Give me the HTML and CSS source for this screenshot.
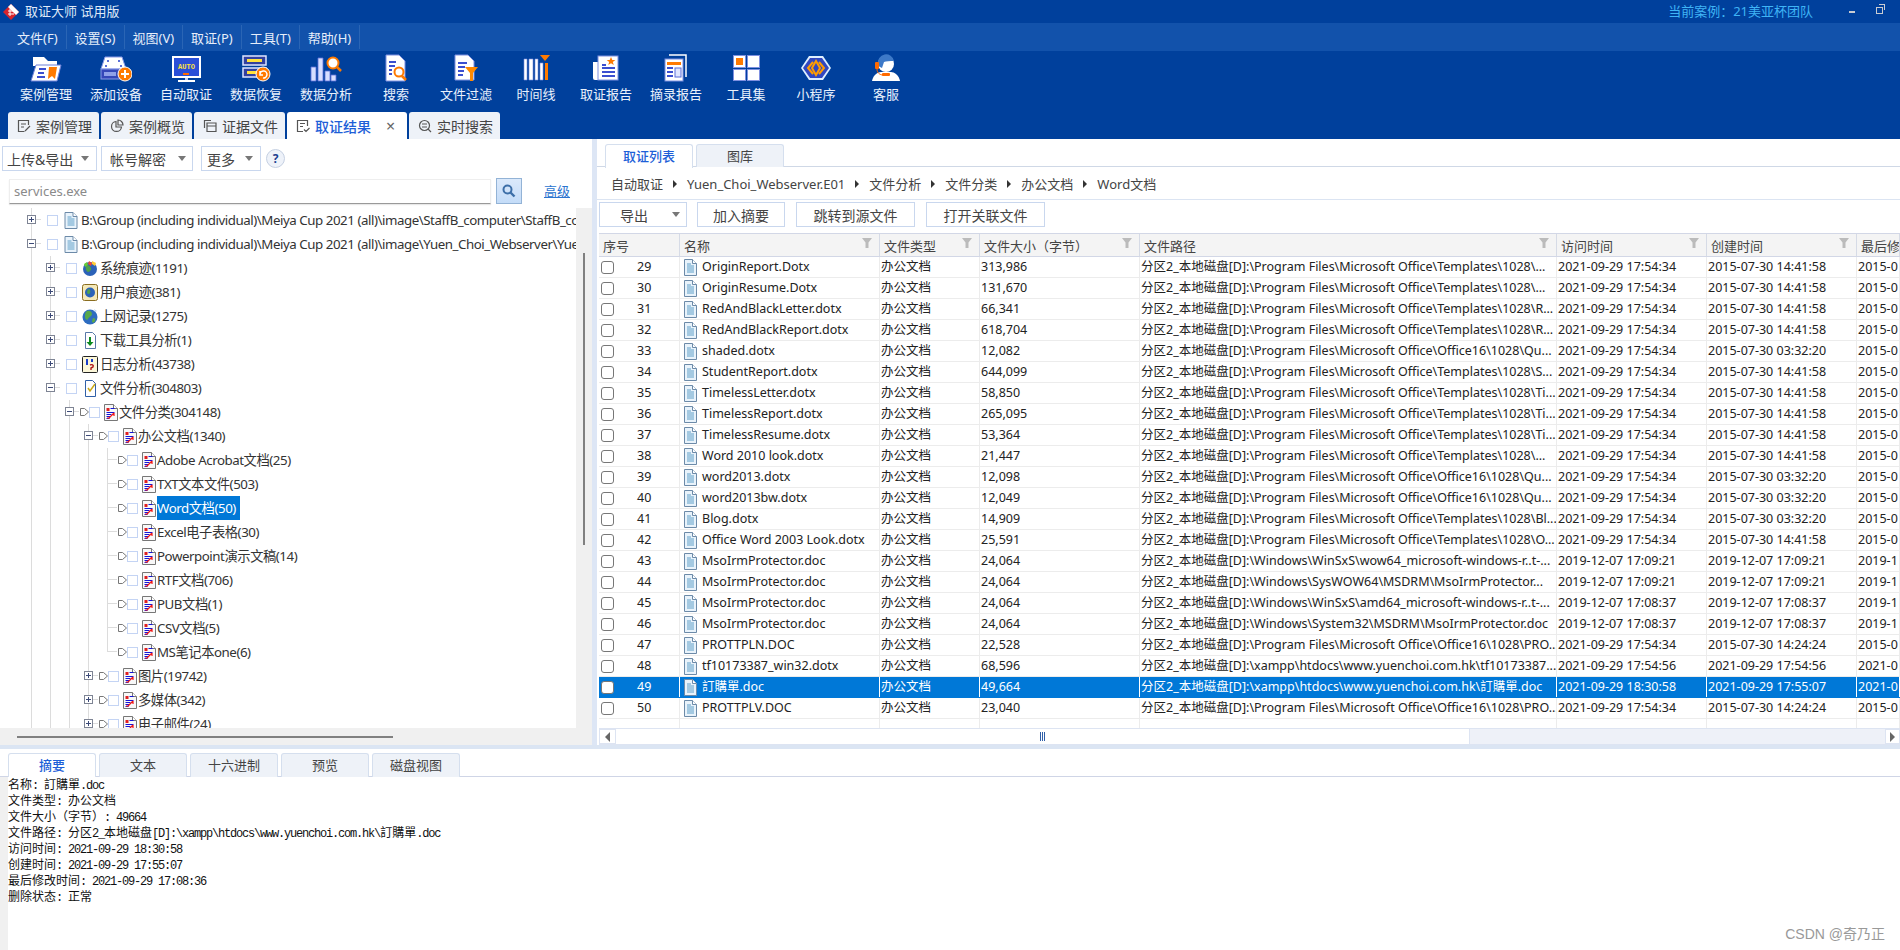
FILE: index.html
```html
<!DOCTYPE html>
<html lang="zh-CN">
<head>
<meta charset="utf-8">
<title>取证大师 试用版</title>
<link rel="stylesheet" href="styles.css">
</head>
<body>
<svg class="sprite" xmlns="http://www.w3.org/2000/svg">
  <symbol id="i-case" viewBox="0 0 32 28"><path d="M3 3h11l4 4h9v5H3z" fill="#fff"/><path d="M6 11h25l-4 16H1z" fill="#fff" stroke="#6d80d8"/><path d="M9 15h7M8 19h6M7 23h8" stroke="#3b4fd0" stroke-width="2"/><path d="M19 13h8l-2 12-3-3-4 3z" fill="#ff7a00"/></symbol>
  <symbol id="i-add" viewBox="0 0 32 28"><path d="M5 3h17l4 12H1z" fill="#fff" stroke="#8a9ae8"/><path d="M7 6h2v2H7zM18 6h2v2h-2zM5 11h2v2H5zM20 11h2v2h-2z" fill="#5a6fd8"/><rect x="1" y="15" width="25" height="10" fill="#3447b8" stroke="#8a9ae8"/><rect x="4" y="18" width="12" height="4" fill="#8fa0e8"/><circle cx="25" cy="20" r="7" fill="#ff7a00" stroke="#fff"/><path d="M25 16v8M21 20h8" stroke="#fff" stroke-width="2"/></symbol>
  <symbol id="i-auto" viewBox="0 0 32 28"><rect x="3" y="3" width="27" height="20" fill="#2a4fd8" stroke="#fff" stroke-width="2"/><text x="16.500" y="15" text-anchor="middle" class="auto">AUTO</text><rect x="13" y="19" width="6" height="2" fill="#ff6a00"/><path d="M15 24h3v2h-3z" fill="#c5d0f5"/><path d="M8 27h17" stroke="#fff" stroke-width="2"/></symbol>
  <symbol id="i-rec" viewBox="0 0 32 28"><rect x="3" y="2" width="23" height="9" fill="#33409f" stroke="#dfe5ff" stroke-width="1.500"/><rect x="7" y="5" width="15" height="3" fill="#ffe23c"/><rect x="3" y="14" width="23" height="9" fill="#33409f" stroke="#dfe5ff" stroke-width="1.500"/><rect x="7" y="17" width="12" height="3" fill="#ffe23c"/><circle cx="23" cy="20" r="7" fill="#ff7a00" stroke="#fff"/><path d="M20 20a3.500 3.500 0 1 1 3 4M20 17v4h3" fill="none" stroke="#fff" stroke-width="1.500"/></symbol>
  <symbol id="i-ana" viewBox="0 0 32 28"><path d="M1 13h5v14H1zM8 4h5v23H8zM15 17h5v10h-5zM21 21h5v6h-5z" fill="#d7deff" stroke="#5a6fd8" stroke-width=".8"/><circle cx="23" cy="9" r="5.500" fill="#fff" stroke="#ff7a00" stroke-width="2"/><path d="M27 13l4 4" stroke="#ff7a00" stroke-width="2.500"/></symbol>
  <symbol id="i-find" viewBox="0 0 32 28"><path d="M6 1h13l6 6v20H6z" fill="#fff" stroke="#7d8fe0"/><path d="M9 8h7M9 12h6M9 16h3M9 20h3" stroke="#3b4fd0" stroke-width="2"/><circle cx="19" cy="18" r="4.500" fill="#fff" stroke="#ff7a00" stroke-width="2"/><path d="M22 22l4 4" stroke="#ff7a00" stroke-width="2.500"/></symbol>
  <symbol id="i-filter" viewBox="0 0 32 28"><path d="M5 1h13l6 6v19H5z" fill="#fff" stroke="#7d8fe0"/><path d="M8 9h9M8 13h7M8 17h6M8 21h5" stroke="#3b4fd0" stroke-width="2"/><path d="M15 13h13l-5 6v8h-3v-8z" fill="#ff8a00"/></symbol>
  <symbol id="i-time" viewBox="0 0 32 28"><path d="M4 5h3v21H4zM9 5h4v21H9zM15 5h3v21h-3zM20 9h3v17h-3z" fill="#fff" stroke="#7d8fe0" stroke-width=".6"/><path d="M25 9h3v17h-3z" fill="#ff7a00"/><path d="M20 1h10l-5 6z" fill="#ff7a00"/></symbol>
  <symbol id="i-rep" viewBox="0 0 32 28"><path d="M3 8h5v18H5a2 2 0 0 1-2-2z" fill="#fff"/><rect x="8" y="2" width="20" height="24" fill="#fff" stroke="#7d8fe0"/><path d="M12 10h4v2h-4z" fill="#3b4fd0"/><path d="M12 14h13M12 18h13M12 22h13" stroke="#3b4fd0" stroke-width="2"/><path d="M21 3l1.300 3h3l-2.500 2 1 3-2.800-1.800-2.800 1.800 1-3-2.500-2h3z" fill="#ff7a00"/></symbol>
  <symbol id="i-exc" viewBox="0 0 32 28"><path d="M9 1h17v22" fill="none" stroke="#fff" stroke-width="1.500"/><rect x="5" y="5" width="18" height="22" fill="#fff" stroke="#7d8fe0"/><rect x="7" y="8" width="14" height="3" fill="#ff7a00"/><path d="M7 14h6M7 18h6M7 22h6" stroke="#3b4fd0" stroke-width="2"/><rect x="15" y="14" width="6" height="9" fill="#dfe5ff" stroke="#5a6fd8"/></symbol>
  <symbol id="i-tool" viewBox="0 0 32 28"><rect x="3.500" y="1.500" width="12" height="12" fill="#fff" stroke="#7d8fe0"/><rect x="6" y="4" width="7" height="7" fill="#ff7a00"/><rect x="17.500" y="1.500" width="12" height="12" fill="#fff" stroke="#7d8fe0"/><rect x="3.500" y="15.500" width="12" height="11" fill="#fff" stroke="#7d8fe0"/><rect x="17.500" y="15.500" width="12" height="11" fill="#fff" stroke="#7d8fe0"/></symbol>
  <symbol id="i-mini" viewBox="0 0 32 28"><path d="M9 2h14l8 12-8 12H9L1 14z" fill="#dff0ff"/><path d="M10 4h12l7 10-7 10H10L3 14z" fill="#3147c0"/><path d="M13 8l-5 6 5 6M19 8l5 6-5 6M16 7l-4 7 4 7 4-7z" fill="none" stroke="#ff9c00" stroke-width="2"/></symbol>
  <symbol id="i-srv" viewBox="0 0 32 28"><path d="M2 27c1-6 6-9 9-9h10c3 0 8 3 9 9z" fill="#fff"/><circle cx="16" cy="10" r="8" fill="#fff"/><path d="M8 10a8 8 0 0 1 16-3c-4 0-8 0-10 1l-2 6c-2-1-4-2-4-4z" fill="#3d79c8"/><rect x="5" y="8" width="4" height="7" rx="1" fill="#ff6a00"/><path d="M7 15c0 4 3 6 6 6" fill="none" stroke="#ff6a00"/><rect x="12" y="19" width="8" height="3" rx="1" fill="#ff6a00"/></symbol>
  <symbol id="t-edit" viewBox="0 0 14 14"><path d="M11.500 6V1.500h-10v11h6M4 5h5M4 8h3M8 12l5-5" fill="none" stroke="#555" stroke-width="1.200"/></symbol>
  <symbol id="t-pie" viewBox="0 0 14 14"><path d="M6 2.500a5 5 0 1 0 5.500 5.500H6z" fill="none" stroke="#555" stroke-width="1.200"/><path d="M8 1a5 5 0 0 1 5 5H8z" fill="none" stroke="#555" stroke-width="1.200"/></symbol>
  <symbol id="t-files" viewBox="0 0 14 14"><path d="M1.500 9V1.500H8M4 4h9v8.500H4zM4 7h9" fill="none" stroke="#555" stroke-width="1.200"/></symbol>
  <symbol id="t-res" viewBox="0 0 14 14"><path d="M7 12.500H1.500v-11h10V7M4 4.500h5M4 7.500h3M8 10.500l2 2 3.500-3.500" fill="none" stroke="#555" stroke-width="1.200"/></symbol>
  <symbol id="t-live" viewBox="0 0 14 14"><circle cx="6.500" cy="6.500" r="5" fill="none" stroke="#555" stroke-width="1.200"/><path d="M10 10l3 3M4 5h5M4 8h5" stroke="#555" stroke-width="1.200"/></symbol>
  <symbol id="f-doc" viewBox="0 0 13 17"><path d="M.500.500h8l4 4v12H.500z" fill="#e9f3fb" stroke="#6c8aa8"/><path d="M8.500.500v4h4" fill="#fff" stroke="#6c8aa8"/><path d="M3 5h4M3 7h7M3 9h7M3 11h7M3 13h7" stroke="#5f9fc8"/></symbol>
  <symbol id="f-rep" viewBox="0 0 15 17"><path d="M1.500.500h9l4 4v12h-13z" fill="#f8f8f8" stroke="#777"/><path d="M10.500.500v4h4" fill="#fff" stroke="#777"/><path d="M3.500 4h3v3h-3z" fill="#e02020"/><path d="M7.500 4.500h4M3.500 8.500h8M3.500 10.500h5M3.500 12.500h4M3.500 14.500h3" stroke="#1414d8"/><path d="M11 9l-5 5M7 14h-3M11 9v3" stroke="#f01818" stroke-width="1.200" fill="none"/></symbol>
  <symbol id="f-sys" viewBox="0 0 16 17"><circle cx="8" cy="9" r="7" fill="#2b62b8"/><path d="M4 6c2-2 4 0 5 2s-2 4-3 4-3-3-2-6z" fill="#4fa04a"/><path d="M7 1l3 2-1 3-3-2z" fill="#e43"/><path d="M10 1l4 2-1 3-3-2z" fill="#fc3"/><path d="M2 4l3-2 1 3-3 2z" fill="#6c3"/></symbol>
  <symbol id="f-usr" viewBox="0 0 16 17"><rect x=".500" y=".500" width="15" height="16" rx="2" fill="#f4e8b8" stroke="#8a6d20"/><circle cx="8" cy="8.500" r="5" fill="#2b62b8"/><path d="M6 5c2 0 3 2 2 4s-3 1-3-1z" fill="#4fa04a"/></symbol>
  <symbol id="f-web" viewBox="0 0 16 17"><circle cx="8" cy="9" r="7.500" fill="#2d6cc0"/><path d="M5 3c3-1 5 1 5 3s-3 3-4 5-3 0-3-2 0-5 2-6z" fill="#59a84a"/><path d="M11 10c2 0 3 1 2 3s-3 2-3 0z" fill="#59a84a"/><path d="M12 1l3 2-2 1z" fill="#bcd8f5"/></symbol>
  <symbol id="f-dl" viewBox="0 0 16 17"><path d="M3.500.500h7l3 3v13h-10z" fill="#fff" stroke="#5878a8"/><path d="M7 5h2v5h2.500L8 14 4.500 10H7z" fill="#0c8a20"/></symbol>
  <symbol id="f-log" viewBox="0 0 16 17"><rect x=".500" y=".500" width="15" height="16" rx="1" fill="#fbf6d8" stroke="#222"/><path d="M4 3h2v6H4z" fill="#1a3ec8"/><path d="M9 3h2v3H9z" fill="#1a3ec8"/><path d="M8 9c2-1 4 0 3 2l-2 1v2" fill="none" stroke="#b01818" stroke-width="1.400"/></symbol>
  <symbol id="f-ana" viewBox="0 0 16 17"><path d="M3.500.500h7l3 3v13h-10z" fill="#fff" stroke="#3060a8"/><path d="M6 8l2 3 5-7" fill="none" stroke="#c8a818" stroke-width="1.500"/></symbol>
  <symbol id="tri" viewBox="0 0 9 10"><path d="M.500 1.500H4.500L8.500 5l-4 3.500h-4z" fill="#fff" stroke="#777"/></symbol>
  <symbol id="funnel" viewBox="0 0 10 12"><path d="M0 1h10L6.500 5.500V11h-3V5.500z" fill="#bbb"/></symbol>
  <symbol id="logo" viewBox="0 0 16 16"><path d="M8 0l8 8-8 8-8-8z" fill="#d8242c"/><path d="M8 0l8 8-3 3L5 3z" fill="#fff"/><path d="M5 7h6M5 10h6M7 5v7" stroke="#fff"/></symbol>
</svg>

<header class="top">
  <div class="titlebar">
    <svg class="logo"><use href="#logo"/></svg>
    <span class="apptitle">取证大师 试用版</span>
    <span class="curcase">当前案例：21美亚杯团队</span>
    <span class="win-min"></span>
    <span class="win-max"><i></i></span>
  </div>
  <nav class="menubar">
    <span class="mi">文件(F)</span><span class="mi">设置(S)</span><span class="mi">视图(V)</span><span class="mi">取证(P)</span><span class="mi">工具(T)</span><span class="mi">帮助(H)</span>
  </nav>
  <div class="ribbon">
    <div class="rb"><svg><use href="#i-case"/></svg><span>案例管理</span></div>
    <div class="rb"><svg><use href="#i-add"/></svg><span>添加设备</span></div>
    <div class="rb"><svg><use href="#i-auto"/></svg><span>自动取证</span></div>
    <div class="rb"><svg><use href="#i-rec"/></svg><span>数据恢复</span></div>
    <div class="rb"><svg><use href="#i-ana"/></svg><span>数据分析</span></div>
    <div class="rb"><svg><use href="#i-find"/></svg><span>搜索</span></div>
    <div class="rb"><svg><use href="#i-filter"/></svg><span>文件过滤</span></div>
    <div class="rb"><svg><use href="#i-time"/></svg><span>时间线</span></div>
    <div class="rb"><svg><use href="#i-rep"/></svg><span>取证报告</span></div>
    <div class="rb"><svg><use href="#i-exc"/></svg><span>摘录报告</span></div>
    <div class="rb"><svg><use href="#i-tool"/></svg><span>工具集</span></div>
    <div class="rb"><svg><use href="#i-mini"/></svg><span>小程序</span></div>
    <div class="rb"><svg><use href="#i-srv"/></svg><span>客服</span></div>
  </div>
  <div class="maintabs">
    <div class="mt"><svg><use href="#t-edit"/></svg><span>案例管理</span></div>
    <div class="mt"><svg><use href="#t-pie"/></svg><span>案例概览</span></div>
    <div class="mt"><svg><use href="#t-files"/></svg><span>证据文件</span></div>
    <div class="mt mt-on"><svg><use href="#t-res"/></svg><span>取证结果</span><b class="close">×</b></div>
    <div class="mt"><svg><use href="#t-live"/></svg><span>实时搜索</span></div>
  </div>
</header>

<main class="workspace">
  <section class="left">
    <div class="ltools">
      <div class="btn b-up"><span>上传&amp;导出</span><i class="caret"></i></div>
      <div class="btn b-acc"><span>帐号解密</span><i class="caret"></i></div>
      <div class="btn b-more"><span>更多</span><i class="caret"></i></div>
      <div class="help">?</div>
    </div>
    <div class="searchrow">
      <div class="sinput">services.exe</div>
      <div class="sbtn"><svg viewBox="0 0 14 14"><circle cx="5.500" cy="5.500" r="4" fill="none" stroke="#3d6fa8" stroke-width="2"/><path d="M8.500 8.500l4 4" stroke="#3d6fa8" stroke-width="2.400"/></svg></div>
      <a class="adv">高级</a>
    </div>
    <div class="treewrap">
      <div class="tree">
        <div class="tr"><span class="exp"><i class="box plus"></i></span><i class="ck ck-a"></i><svg class="ti ti-a"><use href="#f-doc"/></svg><span class="tx tx-root">B:\Group (including individual)\Meiya Cup 2021 (all)\image\StaffB_computer\StaffB_co</span></div>
        <div class="tr"><span class="exp"><i class="box minus"></i></span><i class="ck ck-a"></i><svg class="ti ti-a"><use href="#f-doc"/></svg><span class="tx tx-root">B:\Group (including individual)\Meiya Cup 2021 (all)\image\Yuen_Choi_Webserver\Yue</span></div>
        <div class="tr"><i class="ind"></i><span class="exp"><i class="box plus"></i></span><i class="ck ck-a"></i><svg class="ti ti-a"><use href="#f-sys"/></svg><span class="tx">系统痕迹(1191)</span></div>
        <div class="tr"><i class="ind"></i><span class="exp"><i class="box plus"></i></span><i class="ck ck-a"></i><svg class="ti ti-a"><use href="#f-usr"/></svg><span class="tx">用户痕迹(381)</span></div>
        <div class="tr"><i class="ind"></i><span class="exp"><i class="box plus"></i></span><i class="ck ck-a"></i><svg class="ti ti-a"><use href="#f-web"/></svg><span class="tx">上网记录(1275)</span></div>
        <div class="tr"><i class="ind"></i><span class="exp"><i class="box plus"></i></span><i class="ck ck-a"></i><svg class="ti ti-a"><use href="#f-dl"/></svg><span class="tx">下载工具分析(1)</span></div>
        <div class="tr"><i class="ind"></i><span class="exp"><i class="box plus"></i></span><i class="ck ck-a"></i><svg class="ti ti-a"><use href="#f-log"/></svg><span class="tx">日志分析(43738)</span></div>
        <div class="tr"><i class="ind"></i><span class="exp"><i class="box minus"></i></span><i class="ck ck-a"></i><svg class="ti ti-a"><use href="#f-ana"/></svg><span class="tx">文件分析(304803)</span></div>
        <div class="tr"><i class="ind"></i><i class="ind"></i><span class="exp"><i class="box minus"></i></span><svg class="tri"><use href="#tri"/></svg><i class="ck"></i><svg class="ti"><use href="#f-rep"/></svg><span class="tx">文件分类(304148)</span></div>
        <div class="tr"><i class="ind"></i><i class="ind"></i><i class="ind"></i><span class="exp"><i class="box minus"></i></span><svg class="tri"><use href="#tri"/></svg><i class="ck"></i><svg class="ti"><use href="#f-rep"/></svg><span class="tx">办公文档(1340)</span></div>
        <div class="tr"><i class="ind"></i><i class="ind"></i><i class="ind"></i><i class="ind"></i><span class="exp"></span><svg class="tri"><use href="#tri"/></svg><i class="ck"></i><svg class="ti"><use href="#f-rep"/></svg><span class="tx">Adobe Acrobat文档(25)</span></div>
        <div class="tr"><i class="ind"></i><i class="ind"></i><i class="ind"></i><i class="ind"></i><span class="exp"></span><svg class="tri"><use href="#tri"/></svg><i class="ck"></i><svg class="ti"><use href="#f-rep"/></svg><span class="tx">TXT文本文件(503)</span></div>
        <div class="tr"><i class="ind"></i><i class="ind"></i><i class="ind"></i><i class="ind"></i><span class="exp"></span><svg class="tri"><use href="#tri"/></svg><i class="ck"></i><svg class="ti"><use href="#f-rep"/></svg><span class="tx tx-sel">Word文档(50)</span></div>
        <div class="tr"><i class="ind"></i><i class="ind"></i><i class="ind"></i><i class="ind"></i><span class="exp"></span><svg class="tri"><use href="#tri"/></svg><i class="ck"></i><svg class="ti"><use href="#f-rep"/></svg><span class="tx">Excel电子表格(30)</span></div>
        <div class="tr"><i class="ind"></i><i class="ind"></i><i class="ind"></i><i class="ind"></i><span class="exp"></span><svg class="tri"><use href="#tri"/></svg><i class="ck"></i><svg class="ti"><use href="#f-rep"/></svg><span class="tx">Powerpoint演示文稿(14)</span></div>
        <div class="tr"><i class="ind"></i><i class="ind"></i><i class="ind"></i><i class="ind"></i><span class="exp"></span><svg class="tri"><use href="#tri"/></svg><i class="ck"></i><svg class="ti"><use href="#f-rep"/></svg><span class="tx">RTF文档(706)</span></div>
        <div class="tr"><i class="ind"></i><i class="ind"></i><i class="ind"></i><i class="ind"></i><span class="exp"></span><svg class="tri"><use href="#tri"/></svg><i class="ck"></i><svg class="ti"><use href="#f-rep"/></svg><span class="tx">PUB文档(1)</span></div>
        <div class="tr"><i class="ind"></i><i class="ind"></i><i class="ind"></i><i class="ind"></i><span class="exp"></span><svg class="tri"><use href="#tri"/></svg><i class="ck"></i><svg class="ti"><use href="#f-rep"/></svg><span class="tx">CSV文档(5)</span></div>
        <div class="tr"><i class="ind"></i><i class="ind"></i><i class="ind"></i><i class="ind"></i><span class="exp exp-last"></span><svg class="tri"><use href="#tri"/></svg><i class="ck"></i><svg class="ti"><use href="#f-rep"/></svg><span class="tx">MS笔记本one(6)</span></div>
        <div class="tr"><i class="ind"></i><i class="ind"></i><i class="ind"></i><span class="exp"><i class="box plus"></i></span><svg class="tri"><use href="#tri"/></svg><i class="ck"></i><svg class="ti"><use href="#f-rep"/></svg><span class="tx">图片(19742)</span></div>
        <div class="tr"><i class="ind"></i><i class="ind"></i><i class="ind"></i><span class="exp"><i class="box plus"></i></span><svg class="tri"><use href="#tri"/></svg><i class="ck"></i><svg class="ti"><use href="#f-rep"/></svg><span class="tx">多媒体(342)</span></div>
        <div class="tr"><i class="ind"></i><i class="ind"></i><i class="ind"></i><span class="exp"><i class="box plus"></i></span><svg class="tri"><use href="#tri"/></svg><i class="ck"></i><svg class="ti"><use href="#f-rep"/></svg><span class="tx">电子邮件(24)</span></div>
      </div>
      <div class="vscroll"><i></i></div>
    </div>
    <div class="hscroll-l"><i></i></div>
  </section>
  <div class="splitter"></div>
  <section class="right">
    <div class="rtabs"><div class="rt rt-on">取证列表</div><div class="rt">图库</div></div>
    <div class="crumbs"><span>自动取证</span><i class="sep"></i><span>Yuen_Choi_Webserver.E01</span><i class="sep"></i><span>文件分析</span><i class="sep"></i><span>文件分类</span><i class="sep"></i><span>办公文档</span><i class="sep"></i><span>Word文档</span></div>
    <div class="rtools">
      <div class="btn b-exp"><span>导出</span><i class="caret"></i></div>
      <div class="btn b-a">加入摘要</div>
      <div class="btn b-b">跳转到源文件</div>
      <div class="btn b-b">打开关联文件</div>
    </div>
    <div class="grid">
      <div class="row head">
        <div class="h"><span>序号</span></div>
        <div class="h"><span>名称</span><svg class="fn"><use href="#funnel"/></svg></div>
        <div class="h"><span>文件类型</span><svg class="fn"><use href="#funnel"/></svg></div>
        <div class="h"><span>文件大小（字节）</span><svg class="fn"><use href="#funnel"/></svg></div>
        <div class="h"><span>文件路径</span><svg class="fn"><use href="#funnel"/></svg></div>
        <div class="h"><span>访问时间</span><svg class="fn"><use href="#funnel"/></svg></div>
        <div class="h"><span>创建时间</span><svg class="fn"><use href="#funnel"/></svg></div>
        <div class="h"><span>最后修</span></div>
      </div>
      <div class="row"><div class="c c-no"><i class="cb"></i><span>29</span></div><div class="c c-name"><svg class="fi"><use href="#f-doc"/></svg><span>OriginReport.Dotx</span></div><div class="c">办公文档</div><div class="c">313,986</div><div class="c">分区2_本地磁盘[D]:\Program Files\Microsoft Office\Templates\1028\...</div><div class="c">2021-09-29 17:54:34</div><div class="c">2015-07-30 14:41:58</div><div class="c">2015-0</div></div>
      <div class="row"><div class="c c-no"><i class="cb"></i><span>30</span></div><div class="c c-name"><svg class="fi"><use href="#f-doc"/></svg><span>OriginResume.Dotx</span></div><div class="c">办公文档</div><div class="c">131,670</div><div class="c">分区2_本地磁盘[D]:\Program Files\Microsoft Office\Templates\1028\...</div><div class="c">2021-09-29 17:54:34</div><div class="c">2015-07-30 14:41:58</div><div class="c">2015-0</div></div>
      <div class="row"><div class="c c-no"><i class="cb"></i><span>31</span></div><div class="c c-name"><svg class="fi"><use href="#f-doc"/></svg><span>RedAndBlackLetter.dotx</span></div><div class="c">办公文档</div><div class="c">66,341</div><div class="c">分区2_本地磁盘[D]:\Program Files\Microsoft Office\Templates\1028\R...</div><div class="c">2021-09-29 17:54:34</div><div class="c">2015-07-30 14:41:58</div><div class="c">2015-0</div></div>
      <div class="row"><div class="c c-no"><i class="cb"></i><span>32</span></div><div class="c c-name"><svg class="fi"><use href="#f-doc"/></svg><span>RedAndBlackReport.dotx</span></div><div class="c">办公文档</div><div class="c">618,704</div><div class="c">分区2_本地磁盘[D]:\Program Files\Microsoft Office\Templates\1028\R...</div><div class="c">2021-09-29 17:54:34</div><div class="c">2015-07-30 14:41:58</div><div class="c">2015-0</div></div>
      <div class="row"><div class="c c-no"><i class="cb"></i><span>33</span></div><div class="c c-name"><svg class="fi"><use href="#f-doc"/></svg><span>shaded.dotx</span></div><div class="c">办公文档</div><div class="c">12,082</div><div class="c">分区2_本地磁盘[D]:\Program Files\Microsoft Office\Office16\1028\Qu...</div><div class="c">2021-09-29 17:54:34</div><div class="c">2015-07-30 03:32:20</div><div class="c">2015-0</div></div>
      <div class="row"><div class="c c-no"><i class="cb"></i><span>34</span></div><div class="c c-name"><svg class="fi"><use href="#f-doc"/></svg><span>StudentReport.dotx</span></div><div class="c">办公文档</div><div class="c">644,099</div><div class="c">分区2_本地磁盘[D]:\Program Files\Microsoft Office\Templates\1028\S...</div><div class="c">2021-09-29 17:54:34</div><div class="c">2015-07-30 14:41:58</div><div class="c">2015-0</div></div>
      <div class="row"><div class="c c-no"><i class="cb"></i><span>35</span></div><div class="c c-name"><svg class="fi"><use href="#f-doc"/></svg><span>TimelessLetter.dotx</span></div><div class="c">办公文档</div><div class="c">58,850</div><div class="c">分区2_本地磁盘[D]:\Program Files\Microsoft Office\Templates\1028\Ti...</div><div class="c">2021-09-29 17:54:34</div><div class="c">2015-07-30 14:41:58</div><div class="c">2015-0</div></div>
      <div class="row"><div class="c c-no"><i class="cb"></i><span>36</span></div><div class="c c-name"><svg class="fi"><use href="#f-doc"/></svg><span>TimelessReport.dotx</span></div><div class="c">办公文档</div><div class="c">265,095</div><div class="c">分区2_本地磁盘[D]:\Program Files\Microsoft Office\Templates\1028\Ti...</div><div class="c">2021-09-29 17:54:34</div><div class="c">2015-07-30 14:41:58</div><div class="c">2015-0</div></div>
      <div class="row"><div class="c c-no"><i class="cb"></i><span>37</span></div><div class="c c-name"><svg class="fi"><use href="#f-doc"/></svg><span>TimelessResume.dotx</span></div><div class="c">办公文档</div><div class="c">53,364</div><div class="c">分区2_本地磁盘[D]:\Program Files\Microsoft Office\Templates\1028\Ti...</div><div class="c">2021-09-29 17:54:34</div><div class="c">2015-07-30 14:41:58</div><div class="c">2015-0</div></div>
      <div class="row"><div class="c c-no"><i class="cb"></i><span>38</span></div><div class="c c-name"><svg class="fi"><use href="#f-doc"/></svg><span>Word 2010 look.dotx</span></div><div class="c">办公文档</div><div class="c">21,447</div><div class="c">分区2_本地磁盘[D]:\Program Files\Microsoft Office\Templates\1028\...</div><div class="c">2021-09-29 17:54:34</div><div class="c">2015-07-30 14:41:58</div><div class="c">2015-0</div></div>
      <div class="row"><div class="c c-no"><i class="cb"></i><span>39</span></div><div class="c c-name"><svg class="fi"><use href="#f-doc"/></svg><span>word2013.dotx</span></div><div class="c">办公文档</div><div class="c">12,098</div><div class="c">分区2_本地磁盘[D]:\Program Files\Microsoft Office\Office16\1028\Qu...</div><div class="c">2021-09-29 17:54:34</div><div class="c">2015-07-30 03:32:20</div><div class="c">2015-0</div></div>
      <div class="row"><div class="c c-no"><i class="cb"></i><span>40</span></div><div class="c c-name"><svg class="fi"><use href="#f-doc"/></svg><span>word2013bw.dotx</span></div><div class="c">办公文档</div><div class="c">12,049</div><div class="c">分区2_本地磁盘[D]:\Program Files\Microsoft Office\Office16\1028\Qu...</div><div class="c">2021-09-29 17:54:34</div><div class="c">2015-07-30 03:32:20</div><div class="c">2015-0</div></div>
      <div class="row"><div class="c c-no"><i class="cb"></i><span>41</span></div><div class="c c-name"><svg class="fi"><use href="#f-doc"/></svg><span>Blog.dotx</span></div><div class="c">办公文档</div><div class="c">14,909</div><div class="c">分区2_本地磁盘[D]:\Program Files\Microsoft Office\Templates\1028\Bl...</div><div class="c">2021-09-29 17:54:34</div><div class="c">2015-07-30 03:32:20</div><div class="c">2015-0</div></div>
      <div class="row"><div class="c c-no"><i class="cb"></i><span>42</span></div><div class="c c-name"><svg class="fi"><use href="#f-doc"/></svg><span>Office Word 2003 Look.dotx</span></div><div class="c">办公文档</div><div class="c">25,591</div><div class="c">分区2_本地磁盘[D]:\Program Files\Microsoft Office\Templates\1028\O...</div><div class="c">2021-09-29 17:54:34</div><div class="c">2015-07-30 14:41:58</div><div class="c">2015-0</div></div>
      <div class="row"><div class="c c-no"><i class="cb"></i><span>43</span></div><div class="c c-name"><svg class="fi"><use href="#f-doc"/></svg><span>MsoIrmProtector.doc</span></div><div class="c">办公文档</div><div class="c">24,064</div><div class="c">分区2_本地磁盘[D]:\Windows\WinSxS\wow64_microsoft-windows-r..t-...</div><div class="c">2019-12-07 17:09:21</div><div class="c">2019-12-07 17:09:21</div><div class="c">2019-1</div></div>
      <div class="row"><div class="c c-no"><i class="cb"></i><span>44</span></div><div class="c c-name"><svg class="fi"><use href="#f-doc"/></svg><span>MsoIrmProtector.doc</span></div><div class="c">办公文档</div><div class="c">24,064</div><div class="c">分区2_本地磁盘[D]:\Windows\SysWOW64\MSDRM\MsoIrmProtector...</div><div class="c">2019-12-07 17:09:21</div><div class="c">2019-12-07 17:09:21</div><div class="c">2019-1</div></div>
      <div class="row"><div class="c c-no"><i class="cb"></i><span>45</span></div><div class="c c-name"><svg class="fi"><use href="#f-doc"/></svg><span>MsoIrmProtector.doc</span></div><div class="c">办公文档</div><div class="c">24,064</div><div class="c">分区2_本地磁盘[D]:\Windows\WinSxS\amd64_microsoft-windows-r..t-...</div><div class="c">2019-12-07 17:08:37</div><div class="c">2019-12-07 17:08:37</div><div class="c">2019-1</div></div>
      <div class="row"><div class="c c-no"><i class="cb"></i><span>46</span></div><div class="c c-name"><svg class="fi"><use href="#f-doc"/></svg><span>MsoIrmProtector.doc</span></div><div class="c">办公文档</div><div class="c">24,064</div><div class="c">分区2_本地磁盘[D]:\Windows\System32\MSDRM\MsoIrmProtector.doc</div><div class="c">2019-12-07 17:08:37</div><div class="c">2019-12-07 17:08:37</div><div class="c">2019-1</div></div>
      <div class="row"><div class="c c-no"><i class="cb"></i><span>47</span></div><div class="c c-name"><svg class="fi"><use href="#f-doc"/></svg><span>PROTTPLN.DOC</span></div><div class="c">办公文档</div><div class="c">22,528</div><div class="c">分区2_本地磁盘[D]:\Program Files\Microsoft Office\Office16\1028\PRO...</div><div class="c">2021-09-29 17:54:34</div><div class="c">2015-07-30 14:24:24</div><div class="c">2015-0</div></div>
      <div class="row"><div class="c c-no"><i class="cb"></i><span>48</span></div><div class="c c-name"><svg class="fi"><use href="#f-doc"/></svg><span>tf10173387_win32.dotx</span></div><div class="c">办公文档</div><div class="c">68,596</div><div class="c">分区2_本地磁盘[D]:\xampp\htdocs\www.yuenchoi.com.hk\tf10173387...</div><div class="c">2021-09-29 17:54:56</div><div class="c">2021-09-29 17:54:56</div><div class="c">2021-0</div></div>
      <div class="row row-sel"><div class="c c-no"><i class="cb"></i><span>49</span></div><div class="c c-name"><svg class="fi"><use href="#f-doc"/></svg><span>訂購單.doc</span></div><div class="c">办公文档</div><div class="c">49,664</div><div class="c">分区2_本地磁盘[D]:\xampp\htdocs\www.yuenchoi.com.hk\訂購單.doc</div><div class="c">2021-09-29 18:30:58</div><div class="c">2021-09-29 17:55:07</div><div class="c">2021-0</div></div>
      <div class="row"><div class="c c-no"><i class="cb"></i><span>50</span></div><div class="c c-name"><svg class="fi"><use href="#f-doc"/></svg><span>PROTTPLV.DOC</span></div><div class="c">办公文档</div><div class="c">23,040</div><div class="c">分区2_本地磁盘[D]:\Program Files\Microsoft Office\Office16\1028\PRO...</div><div class="c">2021-09-29 17:54:34</div><div class="c">2015-07-30 14:24:24</div><div class="c">2015-0</div></div>
      <div class="row row-empty"><div class="c"></div><div class="c"></div><div class="c"></div><div class="c"></div><div class="c"></div><div class="c"></div><div class="c"></div><div class="c"></div></div>
    </div>
    <div class="hscroll-r">
      <div class="sb-btn"><i class="arr-l"></i></div>
      <div class="sb-thumb"><i></i><i></i><i></i></div>
      <div class="sb-track"></div>
      <div class="sb-btn sb-end"><i class="arr-r"></i></div>
    </div>
  </section>
</main>
<div class="divider"></div>
<section class="bottom">
  <div class="btabs">
    <div class="bt bt-on">摘要</div><div class="bt">文本</div><div class="bt">十六进制</div><div class="bt">预览</div><div class="bt">磁盘视图</div>
  </div>
  <div class="bbody">
    <div class="gutter"></div>
    <div class="summary">
      <p>名称<tt>: </tt>訂購單<tt>.doc</tt></p>
      <p>文件类型<tt>: </tt>办公文档</p>
      <p>文件大小（字节）<tt>: 49664</tt></p>
      <p>文件路径<tt>: </tt>分区<tt>2_</tt>本地磁盘<tt>[D]:\xampp\htdocs\www.yuenchoi.com.hk\</tt>訂購單<tt>.doc</tt></p>
      <p>访问时间<tt>: 2021-09-29 18:30:58</tt></p>
      <p>创建时间<tt>: 2021-09-29 17:55:07</tt></p>
      <p>最后修改时间<tt>: 2021-09-29 17:08:36</tt></p>
      <p>删除状态<tt>: </tt>正常</p>
    </div>
  </div>
</section>
<div class="watermark">CSDN @奇乃正</div>
</body>
</html>
```
FILE: styles.css
```css
* { box-sizing: border-box; }
html, body { margin: 0; padding: 0; }
body {
  width: 1900px; height: 950px; overflow: hidden; position: relative;
  display: flex; flex-direction: column; background: #fff; color: #333;
  font-family: "Noto Sans", "Noto Sans CJK SC", sans-serif; font-size: 13px;
}
i { font-style: normal; display: block; }
.sprite { display: none; }

/* header */
.top { background: #00409c; color: #fff; flex: none; height: 139px; display: flex; flex-direction: column; }
.titlebar { height: 23px; display: flex; align-items: center; }
.logo { width: 16px; height: 16px; margin-left: 3px; }
.apptitle { margin-left: 6px; color: #dfe9f8; line-height: 23px; }
.curcase { margin-left: auto; color: #3fb4f5; line-height: 23px; }
.win-min { width: 6px; height: 2px; background: #c9ccd2; margin-left: 36px; }
.win-max { width: 7px; height: 7px; border: 1px solid #c9ccd2; margin-left: 21px; margin-right: 17px; margin-top: -3px; }
.win-max i { width: 6px; height: 6px; border-top: 1px solid #c9ccd2; border-right: 1px solid #c9ccd2; margin: -4px 0 0 2px; }
.menubar { height: 28px; background: #1252ab; display: flex; align-items: stretch; padding-left: 9px; }
.mi { display: flex; align-items: center; padding: 0 8px; border-right: 1px solid #2a65b5; margin: 2px 0; color: #e6eefa; white-space: nowrap; }
.ribbon { height: 61px; display: flex; padding-left: 11px; }
.rb { width: 70px; display: flex; flex-direction: column; align-items: center; padding-top: 3px; }
.rb svg { width: 32px; height: 28px; flex: none; }
.rb span { line-height: 18px; margin-top: 3px; color: #e9f1fc; white-space: nowrap; }
.auto { font: bold 7px "Liberation Mono", monospace; fill: #ffe23c; }
.maintabs { height: 27px; display: flex; gap: 2px; padding-left: 8px; }
.mt { width: 91px; background: #eef2f8; border-radius: 3px 3px 0 0; display: flex; align-items: center; padding-left: 9px; font-size: 14px; color: #444; }
.mt svg { width: 14px; height: 14px; margin-right: 5px; flex: none; }
.mt-on { width: 120px; background: #fff; color: #1e5fd8; font-weight: 500; }
.close { margin-left: 15px; color: #666; font-weight: 400; font-size: 16px; }

/* work area */
.workspace { flex: none; height: 606px; display: flex; }
.left { width: 592px; flex: none; display: flex; flex-direction: column; }
.ltools { display: flex; align-items: center; height: 25px; margin-top: 7px; padding-left: 2px; }
.btn { height: 25px; border: 1px solid #c9d7ee; display: flex; align-items: center; justify-content: center; background: #fff; font-size: 14px; color: #444; white-space: nowrap; flex: none; }
.caret { width: 0; height: 0; border-left: 4.5px solid transparent; border-right: 4.5px solid transparent; border-top: 5px solid #777; flex: none; }
.b-up { width: 95px; justify-content: space-between; padding: 0 7px 0 4px; }
.b-acc { width: 92px; margin-left: 4px; justify-content: space-between; padding: 0 6px 0 8px; }
.b-more { width: 60px; margin-left: 8px; justify-content: space-between; padding: 0 7px 0 5px; }
.help { width: 19px; height: 19px; border-radius: 50%; border: 1px solid #c5d0e2; margin-left: 5px; background: #eef2f9; color: #1c3f8f; font-weight: 700; font-size: 12px; display: flex; align-items: center; justify-content: center; }
.searchrow { display: flex; height: 26px; margin-top: 7px; padding-left: 9px; align-items: stretch; }
.sinput { width: 482px; height: 25px; margin-top: 1px; border: 1px solid #eeeeee; border-bottom: 1px solid #999; padding-left: 4px; color: #8a8a8a; font-size: 13px; line-height: 23px; box-shadow: 0 1px 1px #e8e8e8; }
.sbtn { width: 26px; margin-left: 5px; background: linear-gradient(#dbe9fb, #c4dcf8); border: 1px solid #93b3d6; display: flex; align-items: center; justify-content: center; }
.sbtn svg { width: 14px; height: 14px; }
.adv { margin-left: 22px; color: #2b74cf; text-decoration: underline; line-height: 26px; font-size: 13px; }
.treewrap { height: 520px; margin-top: 4px; display: flex; flex: none; }
.tree { width: 576px; padding-left: 22px; overflow: hidden; flex: none; }
.tr { height: 24px; display: flex; align-items: center; white-space: nowrap; }
.ind { width: 19px; height: 24px; flex: none; background: linear-gradient(#dcdcdc, #dcdcdc) 9px 0 / 1px 100% no-repeat; }
.exp {
  width: 19px; height: 24px; flex: none; display: flex; align-items: center; justify-content: center;
  background: linear-gradient(#dcdcdc, #dcdcdc) 9px 0 / 1px 100% no-repeat, linear-gradient(#dcdcdc, #dcdcdc) 9px 11px / 10px 1px no-repeat;
}
.exp-last { background: linear-gradient(#dcdcdc, #dcdcdc) 9px 0 / 1px 12px no-repeat, linear-gradient(#dcdcdc, #dcdcdc) 9px 11px / 10px 1px no-repeat; }
.box { width: 9px; height: 9px; border: 1px solid #7e8494; background-color: #fff; margin-right: 1px; margin-top: -1px; }
.minus { background-image: linear-gradient(#3c4a78, #3c4a78); background-size: 5px 1px; background-position: center; background-repeat: no-repeat; }
.plus { background-image: linear-gradient(#3c4a78, #3c4a78), linear-gradient(#3c4a78, #3c4a78); background-size: 5px 1px, 1px 5px; background-position: center, center; background-repeat: no-repeat; }
.ck { width: 11px; height: 11px; border: 1px solid #c4d4f4; background: #fff; flex: none; }
.ck-a { margin-left: 6px; }
.tri { width: 9px; height: 10px; margin-left: 1px; flex: none; }
.ti { width: 15px; height: 17px; margin-left: 3px; margin-right: 1px; flex: none; }
.ti-a { width: 16px; margin-left: 5px; margin-right: 2px; }
.tx { color: #333; line-height: 24px; font-size: 13.3px; letter-spacing: -.45px; }
.tx-root { flex: 1; min-width: 0; overflow: hidden; }
.tx-sel { background: #0078d7; color: #fff; padding-right: 4px; }
.vscroll { width: 16px; background: #f0f0f0; display: flex; justify-content: center; flex: none; padding-top: 45px; }
.vscroll i { width: 2px; height: 292px; background: #808080; }
.hscroll-l { height: 17px; background: #f0f0f0; padding: 8px 0 0 17px; flex: none; }
.hscroll-l i { width: 376px; height: 2px; background: #808080; }
.splitter { width: 5px; background: #dde6f5; flex: none; }

/* right */
.right { flex: 1; min-width: 0; padding-left: 2px; display: flex; flex-direction: column; }
.rtabs { height: 28px; padding: 5px 0 0 8px; margin-left: -2px; display: flex; gap: 3px; border-bottom: 1px solid #cfd8e6; flex: none; }
.rt { width: 88px; height: 23px; background: #eef2f8; border: 1px solid #d5dfee; border-bottom: 0; border-radius: 3px 3px 0 0; text-align: center; line-height: 22px; color: #444; }
.rt-on { background: #fff; color: #1e5fd8; font-weight: 500; height: 24px; }
.crumbs { height: 33px; margin-left: -2px; padding: 1px 0 0 14px; display: flex; align-items: center; border-bottom: 1px solid #dbe4f2; color: #444; white-space: nowrap; flex: none; }
.sep { width: 24px; height: 8px; flex: none; display: flex; justify-content: center; }
.sep::before { content: ""; width: 0; height: 0; border-left: 4px solid #333; border-top: 4px solid transparent; border-bottom: 4px solid transparent; }
.rtools { height: 27px; display: flex; padding-top: 2px; flex: none; }
.rtools .btn { height: 25px; }
.b-exp { width: 88px; justify-content: space-between; padding: 0 6px 0 20px; }
.b-a { width: 88px; margin-left: 10px; }
.b-b { width: 119px; margin-left: 11px; }
.grid { margin-top: 6px; flex: none; height: 495px; overflow: hidden; }
.row { display: grid; grid-template-columns: 81px 200px 100px 160px 417px 150px 150px 43px; height: 21px; border-bottom: 1px solid #ececec; font-size: 12.5px; color: #222; }
.head { height: 24px; background: #f4f4f4; border-top: 1px solid #d2d7e6; border-bottom: 1px solid #d2d7e6; font-size: 13px; color: #444; }
.h { display: flex; align-items: center; justify-content: space-between; padding: 0 7px 0 4px; border-right: 1px solid #d6dbe6; white-space: nowrap; overflow: hidden; }
.fn { width: 10px; height: 12px; flex: none; margin-top: -5px; }
.c { display: flex; align-items: center; padding-left: 1px; border-right: 1px solid #ececec; white-space: nowrap; overflow: hidden; line-height: 20px; }
.c-no { padding-left: 2px; }
.cb { width: 13px; height: 13px; border: 1px solid #777; border-radius: 3px; background: #fff; flex: none; }
.c-no span { margin-left: 23px; }
.c-name { padding-left: 4px; }
.fi { width: 13px; height: 17px; margin-right: 5px; flex: none; }
.row-sel { background: #0078d7; color: #fff; border-bottom-color: #0078d7; }
.row-sel .c { border-right-color: #fff; }
.row-empty { height: 9px; border-bottom: 0; }
.hscroll-r { height: 17px; display: flex; flex: none; border-top: 1px solid #dde4f2; border-bottom: 1px solid #dde4f2; }
.sb-btn { width: 17px; border: 1px solid #dde4f2; background: #fff; display: flex; align-items: center; justify-content: center; flex: none; }
.arr-l { border-right: 5px solid #666; border-top: 5px solid transparent; border-bottom: 5px solid transparent; }
.arr-r { border-left: 5px solid #666; border-top: 5px solid transparent; border-bottom: 5px solid transparent; }
.sb-end { width: 15px; }
.sb-thumb { width: 854px; display: flex; align-items: center; justify-content: center; gap: 1px; border-right: 1px solid #dde4f2; flex: none; }
.sb-thumb i { width: 1px; height: 9px; background: #2f5fa8; }
.sb-track { flex: 1; background: #eef1f8; }

.divider { height: 4px; background: #dbe5f3; flex: none; }

/* bottom */
.bottom { flex: 1; display: flex; flex-direction: column; min-height: 0; }
.btabs { height: 28px; padding: 4px 0 0 8px; display: flex; gap: 3px; border-bottom: 1px solid #cfd5e6; flex: none; }
.bt { width: 88px; height: 24px; background: #eef2f8; border: 1px solid #d5dfee; border-bottom: 0; border-radius: 3px 3px 0 0; text-align: center; line-height: 23px; color: #444; }
.bt-on { background: #fff; color: #1e5fd8; font-weight: 500; }
.bbody { flex: 1; display: flex; }
.gutter { width: 8px; background: #f0f0f0; }
.summary { flex: 1; background: #fff; color: #111; font-size: 12px; }
.summary p { margin: 0; height: 16px; line-height: 16px; white-space: nowrap; }
.summary tt { font-family: "Liberation Mono", monospace; font-size: 12px; letter-spacing: -1.2px; }
.watermark { position: absolute; right: 15px; top: 924px; color: #999; font-size: 14px; font-family: "Liberation Sans", "Noto Sans CJK SC", sans-serif; line-height: 20px; }
```
